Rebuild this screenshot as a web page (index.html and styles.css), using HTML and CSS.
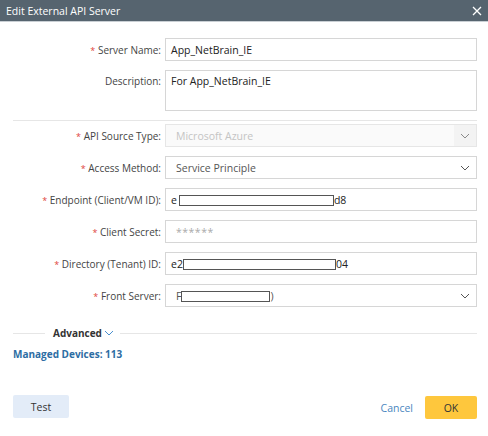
FILE: index.html
```html
<!DOCTYPE html>
<html lang="en">
<head>
  <meta charset="UTF-8">
  <title>Edit External API Server</title>
  <link rel="stylesheet" href="styles.css">
</head>
<body>
  <div class="dialog">
    <div class="dialog-header">
      <span class="dialog-title">Edit External API Server</span>
      <svg class="close-icon" width="10" height="10" viewBox="0 0 10 10">
        <path d="M1 1 L9 9 M9 1 L1 9" stroke="#ffffff" stroke-width="1.3" fill="none"/>
      </svg>
    </div>

    <div class="dialog-body">
      <div class="form-row">
        <label class="field-label"><span class="req">*</span> Server Name:</label>
        <div class="field">App_NetBrain_IE</div>
      </div>
      <div class="form-row">
        <label class="field-label">Description:</label>
        <div class="field textarea">For App_NetBrain_IE</div>
      </div>

      <div class="divider"></div>

      <div class="form-row">
        <label class="field-label"><span class="req">*</span> API Source Type:</label>
        <div class="field select disabled">
          <span class="select-text">Microsoft Azure</span>
          <span class="select-arrow">
            <svg width="10" height="6" viewBox="0 0 10 6"><path d="M1 1 L5 5 L9 1" stroke="#8a8a8a" fill="none"/></svg>
          </span>
        </div>
      </div>
      <div class="form-row">
        <label class="field-label"><span class="req">*</span> Access Method:</label>
        <div class="field select">
          <span class="select-text">Service Principle</span>
          <span class="select-arrow">
            <svg width="10" height="6" viewBox="0 0 10 6"><path d="M1 1 L5 5 L9 1" stroke="#555" fill="none"/></svg>
          </span>
        </div>
      </div>
      <div class="form-row">
        <label class="field-label"><span class="req">*</span> Endpoint (Client/VM ID):</label>
        <div class="field masked">e<span class="redact r-endpoint"></span>d8</div>
      </div>
      <div class="form-row">
        <label class="field-label"><span class="req">*</span> Client Secret:</label>
        <div class="field secret">******</div>
      </div>
      <div class="form-row">
        <label class="field-label"><span class="req">*</span> Directory (Tenant) ID:</label>
        <div class="field masked">e2<span class="redact r-tenant"></span>04</div>
      </div>
      <div class="form-row">
        <label class="field-label"><span class="req">*</span> Front Server:</label>
        <div class="field select">
          <span class="select-text masked">F<span class="redact r-front"></span>)</span>
          <span class="select-arrow">
            <svg width="10" height="6" viewBox="0 0 10 6"><path d="M1 1 L5 5 L9 1" stroke="#555" fill="none"/></svg>
          </span>
        </div>
      </div>

      <div class="advanced">
        <span class="adv-line short"></span>
        <span class="adv-text">Advanced</span>
        <svg class="adv-arrow" width="10" height="6" viewBox="0 0 10 6"><path d="M1 1 L5 5 L9 1" stroke="#4a90d0" fill="none"/></svg>
        <span class="adv-line"></span>
      </div>

      <div class="managed">Managed Devices: 113</div>
    </div>

    <div class="dialog-footer">
      <button class="btn-test">Test</button>
      <div class="footer-right">
        <a class="btn-cancel">Cancel</a>
        <button class="btn-ok">OK</button>
      </div>
    </div>
  </div>
</body>
</html>
```

FILE: styles.css
```css
body {
  margin: 0;
  background: #ffffff;
  font-family: "Open Sans", "DejaVu Sans", sans-serif;
  font-size: 11px;
  color: #333;
}
.dialog {
  width: 488px;
  height: 436px;
  display: flex;
  flex-direction: column;
}
.dialog-header {
  height: 21px;
  background: #56646f;
  border-bottom: 1px solid #c9cfd4;
  display: flex;
  align-items: center;
  justify-content: space-between;
  padding: 0 5px 0 6px;
}
.dialog-title {
  color: #ffffff;
  font-size: 10.5px;
}
.close-icon {
  margin-right: 1px;
}
.dialog-body {
  padding: 16px 11px 0 13px;
}
.form-row {
  display: grid;
  grid-template-columns: 148px 1fr;
  column-gap: 4px;
  align-items: center;
  margin-bottom: 9px;
}
.form-row:nth-child(2) {
  align-items: start;
  margin-bottom: 9px;
}
.form-row:nth-child(2) .field-label {
  padding-top: 4px;
}
.field-label {
  text-align: right;
  color: #444;
  font-size: 10px;
  white-space: nowrap;
}
.req {
  color: #e0443c;
  font-size: 9px;
}
.field {
  height: 23px;
  box-sizing: border-box;
  border: 1px solid #d6d6d6;
  padding: 0 5px;
  display: flex;
  align-items: center;
  color: #222;
  font-size: 10.5px;
}
.field.textarea {
  height: 41px;
  align-items: flex-start;
  padding-top: 3px;
}
.field.select {
  justify-content: space-between;
  padding: 0 0 0 10px;
  color: #555;
}
.field.select.disabled {
  background: #fafafa;
  border-color: #e6e6e6;
  color: #c4c4c4;
}
.select-arrow {
  width: 22px;
  height: 100%;
  display: flex;
  align-items: center;
  justify-content: center;
}
.disabled .select-arrow {
  background: #f3f3f3;
}
.field.secret {
  padding-left: 10px;
  color: #aaa;
  letter-spacing: 0.5px;
}
.masked {
  display: flex;
  align-items: center;
}
.redact {
  display: inline-block;
  height: 11px;
  box-sizing: border-box;
  border: 1px solid #555;
  background: #fff;
  margin-top: 1px;
}
.r-endpoint {
  width: 155px;
  margin-left: 2px;
}
.r-tenant {
  width: 153px;
}
.r-front {
  width: 89px;
}
.divider {
  height: 1px;
  background: #e6e6e6;
  margin: 0 0 3px 0;
}
.advanced {
  display: flex;
  align-items: center;
  margin-top: 19px;
}
.adv-line {
  flex: 1;
  height: 1px;
  background: #e6e6e6;
}
.adv-line.short {
  flex: 0 0 32px;
  margin-right: 8px;
}
.adv-text {
  font-weight: bold;
  font-size: 10px;
  color: #333;
}
.adv-arrow {
  margin: 0 6px 0 2px;
}
.managed {
  margin-top: 7px;
  font-weight: bold;
  font-size: 10px;
  color: #2d6da3;
}
.dialog-footer {
  margin-top: auto;
  margin-bottom: 17px;
  padding: 0 11px 0 13px;
  display: flex;
  justify-content: space-between;
  align-items: center;
}
.btn-test {
  width: 56px;
  height: 23px;
  border: none;
  border-radius: 2px;
  background: #e3ecf8;
  color: #333;
  font-family: inherit;
  font-size: 10.5px;
  margin-top: -2px;
}
.footer-right {
  display: flex;
  align-items: center;
}
.btn-cancel {
  color: #4a86c0;
  font-size: 10.5px;
  margin-right: 12px;
}
.btn-ok {
  width: 52px;
  height: 23px;
  border: none;
  border-radius: 2px;
  background: #fec73d;
  color: #333;
  font-family: inherit;
  font-size: 10.5px;
}
```
